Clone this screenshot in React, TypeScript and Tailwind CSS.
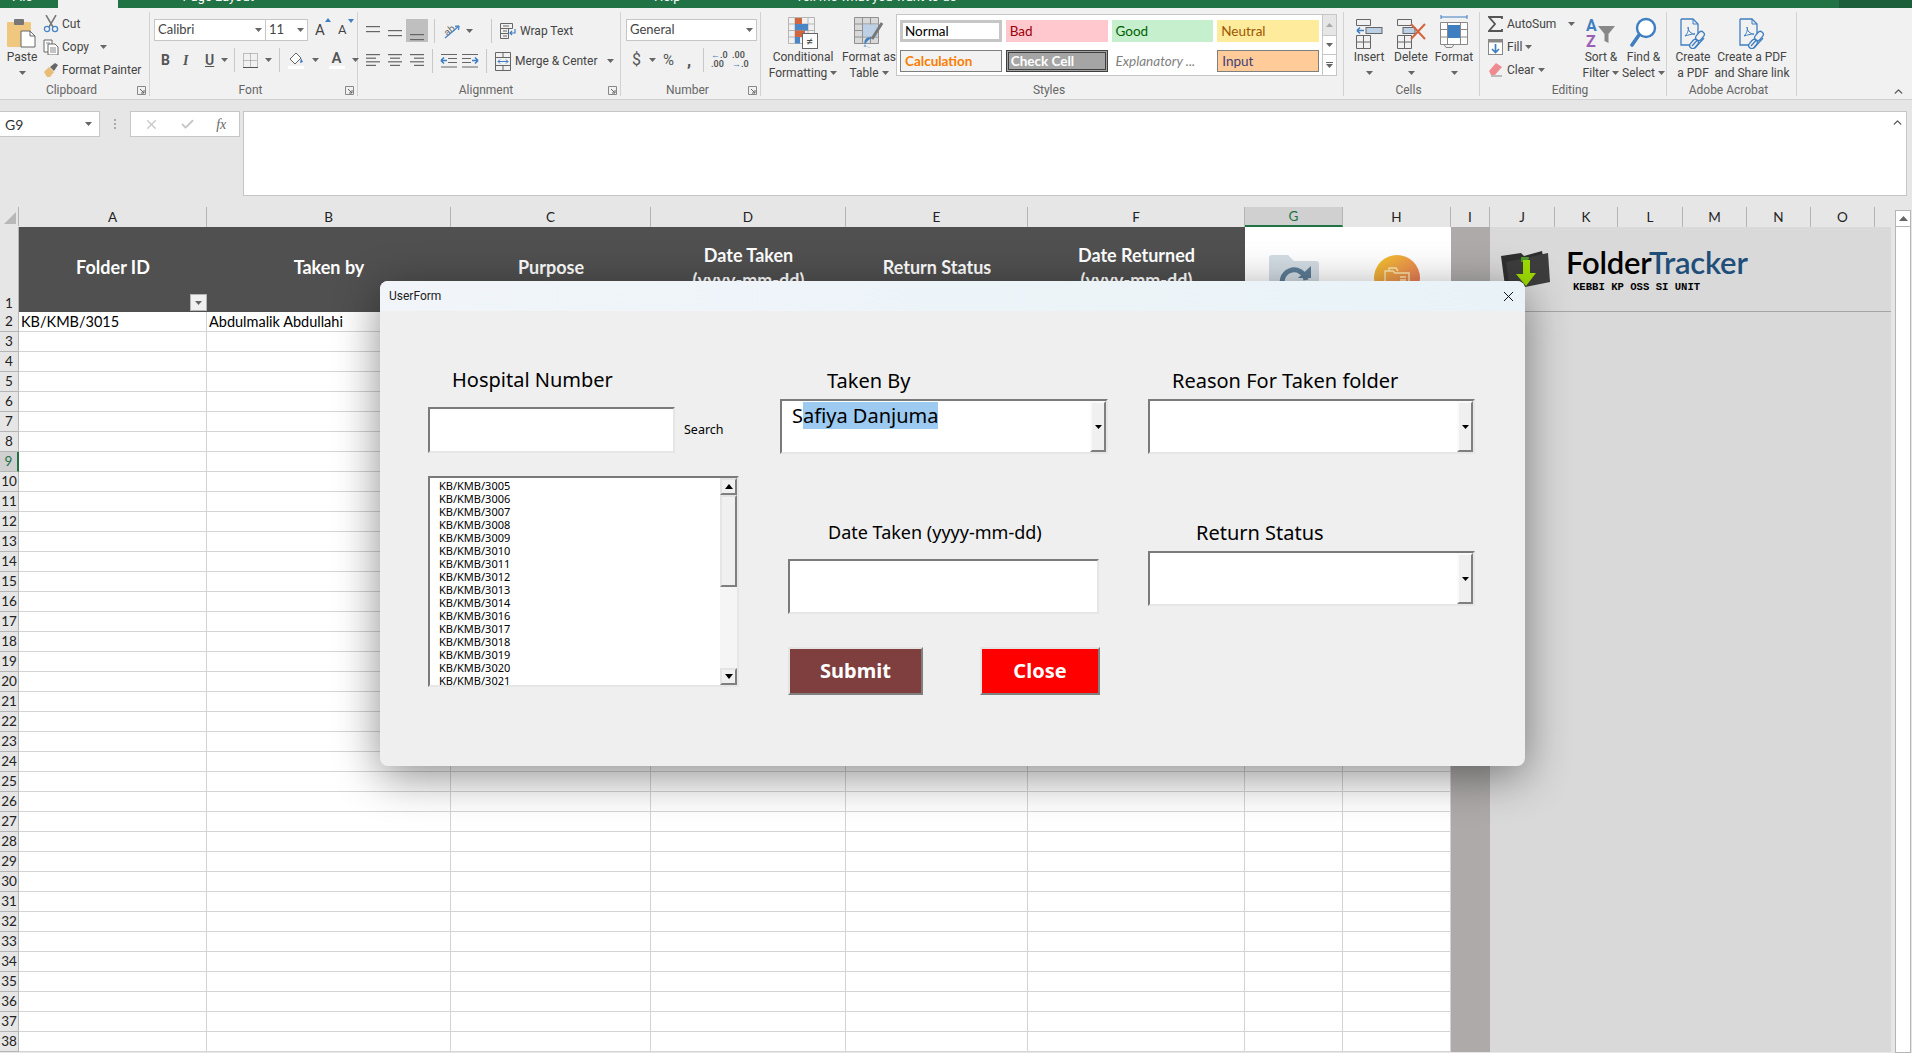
import React from 'react';
import { Check, ChevronUp, X } from 'lucide-react';

// --- petites icones du ruban ---
const Caret = ({ className = '' }: { className?: string }) => (
  <svg width="7" height="4" viewBox="0 0 7 4" className={`shrink-0 ${className}`}><path d="M0 0h7L3.5 4z" fill="#666" /></svg>
);

const Lines = ({ rows, y0 = 0, step = 5 }: { rows: [number, number][]; y0?: number; step?: number }) => (
  <svg width="15" height="16" viewBox="0 0 15 16">
    {rows.map((r, i) => <rect key={i} x={r[0]} y={y0 + i * step} width={r[1] - r[0]} height="1.2" fill="#666" />)}
  </svg>
);

const Launcher = () => (
  <svg width="9" height="9" viewBox="0 0 9 9" className="absolute right-[3px] bottom-[1px]">
    <path d="M0.5 8.5V0.5H8.5V8.5z" fill="none" stroke="#888" />
    <path d="M3 3l4 4M7 4v3H4" fill="none" stroke="#666" />
  </svg>
);

const PasteIcon = () => (
  <svg width="30" height="30" viewBox="0 0 30 30">
    <rect x="0" y="4" width="24" height="25" rx="1" fill="#efc77f" />
    <rect x="7" y="1" width="10" height="6" rx="1" fill="#777" />
    <path d="M14 13h9l5 5v11H14z" fill="#fff" stroke="#666" />
    <path d="M23 13v5h5" fill="none" stroke="#666" />
  </svg>
);
const CutIcon = () => (
  <svg width="16" height="18" viewBox="0 0 16 18">
    <path d="M3 0l7 12M13 0L6 12" stroke="#777" strokeWidth="1.5" fill="none" />
    <circle cx="4" cy="14" r="2.6" fill="none" stroke="#4a86c5" strokeWidth="1.3" />
    <circle cx="12" cy="14" r="2.6" fill="none" stroke="#4a86c5" strokeWidth="1.3" />
  </svg>
);
const CopyIcon = () => (
  <svg width="16" height="16" viewBox="0 0 16 16">
    <path d="M1 1h8v12H1z" fill="#fff" stroke="#666" />
    <path d="M5 5h7l3 3v8H5z" fill="#fff" stroke="#666" />
    <path d="M7 9h6M7 11h6M7 13h6M3 4h4" stroke="#888" />
  </svg>
);
const BrushIcon = () => (
  <svg width="16" height="16" viewBox="0 0 16 16">
    <path d="M1 10l5-5 5 5-4 5H4z" fill="#e9bd77" />
    <path d="M7 5l5-4 3 2-4 6z" fill="#666" />
  </svg>
);
const OrientIcon = () => (
  <svg width="19" height="20" viewBox="0 0 19 20">
    <text x="1" y="12" fontSize="10" fill="#666" transform="rotate(-40 8 8)" fontFamily="Roboto">ab</text>
    <path d="M3 17L17 5" stroke="#4a86c5" strokeWidth="1.3" />
    <path d="M17 5l-4 .5M17 5l-.5 4" stroke="#4a86c5" strokeWidth="1.3" fill="none" />
  </svg>
);
const WrapIcon = () => (
  <svg width="16" height="16" viewBox="0 0 16 16">
    <path d="M0.5 0.5h12v5h-12zM0.5 5.5h8v5h-8zM0.5 10.5h8v5h-8z" fill="none" stroke="#666" />
    <path d="M3 3h6M3 8h4M3 13h4" stroke="#666" />
    <path d="M15 6v4h-5M12 8l-2 2 2 2" fill="none" stroke="#3f7fc1" strokeWidth="1.2" />
  </svg>
);
const MergeIcon = () => (
  <svg width="16" height="19" viewBox="0 0 16 19">
    <path d="M0.5 0.5h15v18h-15zM0.5 5.5h15M0.5 13.5h15M8 0.5v5M8 13.5v5" fill="none" stroke="#666" />
    <path d="M3 9.5h10M3 9.5l2-2M3 9.5l2 2M13 9.5l-2-2M13 9.5l-2 2" stroke="#3f7fc1" fill="none" />
  </svg>
);
const IndentIcon = ({ flip = false }: { flip?: boolean }) => (
  <svg width="17" height="14" viewBox="0 0 17 14" className={flip ? '-scale-x-100' : ''}>
    <path d="M1 0.5h16M8 4.5h9M8 8.5h9M1 13h16" stroke="#666" />
    <path d="M7 6.5H1M1 6.5l3-3M1 6.5l3 3" stroke="#3f7fc1" strokeWidth="1.6" fill="none" />
  </svg>
);
const CondIcon = () => (
  <svg width="30" height="32" viewBox="0 0 30 32">
    <path d="M0.5 0.5h26v26h-26zM0.5 7h26M0.5 13.5h26M0.5 20h26M7 0.5v26M20 0.5v26" fill="none" stroke="#b5b5b5" />
    <rect x="7" y="1" width="7" height="6" fill="#d3653d" />
    <rect x="7" y="7" width="13" height="6.5" fill="#4a86c5" />
    <rect x="7" y="13.5" width="10" height="6.5" fill="#d3653d" />
    <rect x="7" y="20" width="5" height="6.5" fill="#4a86c5" />
    <rect x="14.5" y="16.5" width="15" height="15" fill="#fff" stroke="#666" />
    <text x="18" y="29" fontSize="13" fill="#444" fontFamily="Roboto">≠</text>
  </svg>
);
const TableIcon = () => (
  <svg width="30" height="32" viewBox="0 0 30 32">
    <path d="M0.5 0.5h24v26h-24zM0.5 7h24M0.5 13.5h24M0.5 20h24M8.5 0.5v26M16.5 0.5v26" fill="#d9d9d9" stroke="#909090" />
    <rect x="9" y="7.5" width="15" height="12" fill="#bcd0e6" />
    <path d="M28 6L18 22" stroke="#777" strokeWidth="3" />
    <path d="M18 21a5 5 0 1 0-1 9c-5 0-6-1-8 0 3-2 2-6 9-9z" fill="#3f7fc1" />
  </svg>
);
const InsertIcon = () => (
  <svg width="28" height="32" viewBox="0 0 28 32">
    <path d="M1.5 2.5h14v6h-14zM1.5 18.5h14v13h-14zM1.5 25h14M8.5 18.5v13" fill="none" stroke="#666" />
    <rect x="11" y="10.5" width="16" height="6" fill="#bcd0e6" stroke="#666" />
    <path d="M9 13.5H2M2 13.5l3-3M2 13.5l3 3" stroke="#3f7fc1" strokeWidth="1.6" fill="none" />
  </svg>
);
const DeleteIcon = () => (
  <svg width="30" height="32" viewBox="0 0 30 32">
    <path d="M1.5 2.5h14v6h-14zM1.5 18.5h14v13h-14zM1.5 25h14M8.5 18.5v13" fill="none" stroke="#666" />
    <rect x="7" y="10.5" width="12" height="6" fill="#bcd0e6" stroke="#666" />
    <path d="M15 7l14 15M29 7L15 22" stroke="#d3653d" strokeWidth="2" />
  </svg>
);
const FormatIcon = () => (
  <svg width="28" height="36" viewBox="0 0 28 36">
    <path d="M1 2h26M1 0v4M27 0v4" stroke="#3f7fc1" fill="none" />
    <path d="M0.5 7.5h27v22h-27zM0.5 14.5h27M0.5 22h27M7.5 7.5v22M20.5 7.5v22" fill="#fff" stroke="#888" />
    <rect x="8" y="10" width="12" height="13" fill="#3f7fc1" />
    <path d="M4 29.5l2 3h6l2-3" fill="none" stroke="#888" />
  </svg>
);
const SumIcon = () => (
  <svg width="15" height="16" viewBox="0 0 15 16"><path d="M14 3V1H1l6 7-6 7h13v-2" fill="none" stroke="#555" strokeWidth="1.8" /></svg>
);
const FillIcon = () => (
  <svg width="15" height="16" viewBox="0 0 15 16">
    <rect x="0.5" y="0.5" width="14" height="15" fill="#fff" stroke="#888" />
    <rect x="0.5" y="0.5" width="14" height="3" fill="#888" />
    <path d="M7.5 5v8M4 10l3.5 3.5L11 10" fill="none" stroke="#3f7fc1" strokeWidth="1.7" />
  </svg>
);
const EraserIcon = () => (
  <svg width="15" height="15" viewBox="0 0 15 15">
    <path d="M1 9l7-8 6 4-7 8H3z" fill="#ee8a92" />
    <path d="M3 14h11" stroke="#888" />
  </svg>
);
const SortIcon = () => (
  <svg width="30" height="32" viewBox="0 0 30 32">
    <text x="0" y="14" fontSize="16" fontWeight="700" fill="#3f7fc1" fontFamily="Roboto">A</text>
    <text x="0" y="30" fontSize="16" fontWeight="700" fill="#9a5fb5" fontFamily="Roboto">Z</text>
    <path d="M12 9h17l-6.5 8v9l-4-2v-7z" fill="#888" />
  </svg>
);
const FindIcon = () => (
  <svg width="28" height="32" viewBox="0 0 28 32">
    <circle cx="16" cy="11" r="9" fill="#fff" stroke="#3f7fc1" strokeWidth="2.4" />
    <path d="M9 18L2 28" stroke="#3f7fc1" strokeWidth="3.6" strokeLinecap="round" />
  </svg>
);
const PdfIcon = () => (
  <svg width="26" height="32" viewBox="0 0 26 32">
    <path d="M1 2h12l5 5v12M1 2v26h9" fill="none" stroke="#3f7fc1" strokeWidth="1.3" />
    <path d="M13 2v5h5" fill="none" stroke="#3f7fc1" />
    <path d="M5 19c3-3 4-7 3-9 0 4 3 7 7 7-3 0-7 1-10 2z" fill="none" stroke="#3f7fc1" />
    <path d="M12 29l9-10M15 31l9-10" stroke="#3f7fc1" strokeWidth="1.3" />
    <rect x="17" y="14" width="6" height="10" rx="3" transform="rotate(40 20 19)" fill="#f1f1f1" stroke="#3f7fc1" strokeWidth="1.3" />
    <rect x="11" y="22" width="6" height="10" rx="3" transform="rotate(40 14 27)" fill="none" stroke="#3f7fc1" strokeWidth="1.3" />
  </svg>
);

// --- ruban ---
const Group = ({ width, label, launcher, children }: { width: string; label: string; launcher?: boolean; children: React.ReactNode }) => (
  <div className={`${width} h-[84px] shrink-0 flex flex-col relative border-r border-[#d2d2d2]`}>
    <div className="h-[72px] flex">{children}</div>
    <div className="h-[12px] leading-[12px] text-[12px] text-[#666] text-center pr-[6px]">{label}</div>
    {launcher && <Launcher />}
  </div>
);

const BigBtn = ({ width, icon, l1, l2, caret }: { width: string; icon: React.ReactNode; l1: string; l2?: string; caret?: boolean }) => (
  <div className={`${width} flex flex-col items-center shrink-0`}>
    <div className="h-[33px] mt-[4px] flex items-center justify-center">{icon}</div>
    <div className="h-[16px] leading-[16px] whitespace-nowrap">{l1}</div>
    <div className="h-[16px] leading-[16px] whitespace-nowrap flex items-center gap-[3px]">{l2}{caret && <Caret />}</div>
  </div>
);

const SmallRow = ({ icon, text, caret, gap = 'gap-[3px]' }: { icon: React.ReactNode; text: string; caret?: React.ReactNode; gap?: string }) => (
  <div className={`h-[23px] flex items-center ${gap} whitespace-nowrap`}>
    <div className="w-[17px] flex justify-center shrink-0">{icon}</div>
    <span>{text}</span>
    {caret}
  </div>
);

const Sep = () => <div className="w-px h-[24px] bg-[#c8c8c8] shrink-0" />;

const StyleCell = ({ className, children }: { className: string; children: React.ReactNode }) => (
  <div className={`h-[22px] flex items-center px-[4px] text-[13.5px] font-['Lato',sans-serif] whitespace-nowrap overflow-hidden ${className}`}>{children}</div>
);

const Ribbon = () => (
  <div className="h-[92px] bg-[#f1f1f1] border-b border-[#d0d0d0] flex pt-[4px] text-[12px] text-[#444] box-border">
    <Group width="w-[150px]" label="Clipboard" launcher>
      <div className="w-[41px] flex flex-col items-center pl-[3px] shrink-0">
        <div className="mt-[4px] h-[33px] flex items-center"><PasteIcon /></div>
        <div className="h-[16px] leading-[16px]">Paste</div>
        <div className="h-[16px] flex items-center"><Caret /></div>
      </div>
      <div className="pl-[1px] flex flex-col">
        <SmallRow icon={<CutIcon />} text="Cut" />
        <SmallRow icon={<CopyIcon />} text="Copy" caret={<Caret className="ml-[8px]" />} />
        <SmallRow icon={<BrushIcon />} text="Format Painter" />
      </div>
    </Group>

    <Group width="w-[208px]" label="Font" launcher>
      <div className="pl-[4px] pt-[7px] flex flex-col gap-[8px]">
        <div className="flex items-center h-[22px]">
          <div className="w-[112px] h-[22px] bg-white border border-[#c6c6c6] flex items-center justify-between px-[3px] font-['Lato',sans-serif] text-[13px]">Calibri<Caret /></div>
          <div className="w-[42px] h-[22px] bg-white border border-[#c6c6c6] border-l-0 flex items-center justify-between px-[3px] font-['Lato',sans-serif] text-[13px]">11<Caret /></div>
          <div className="ml-[7px] w-[20px] text-[15px] relative">A<span className="absolute left-[10px] -top-[1px]"><svg width="7" height="5"><path d="M0 4h6L3 0z" fill="#3f7fc1" /></svg></span></div>
          <div className="ml-[3px] w-[20px] text-[13px] relative">A<span className="absolute left-[10px] -top-[1px]"><svg width="7" height="5"><path d="M0 0h6L3 4z" fill="#3f7fc1" /></svg></span></div>
        </div>
        <div className="flex items-center h-[22px] text-[14px] text-[#555]">
          <span className="ml-[7px] w-[22px] font-bold">B</span>
          <span className="w-[22px] italic font-['Liberation_Serif',serif] font-bold">I</span>
          <span className="w-[15px] underline font-semibold">U</span>
          <Caret className="ml-[1px]" />
          <div className="ml-[6px]"><Sep /></div>
          <svg width="15" height="15" viewBox="0 0 15 15" className="ml-[8px]"><path d="M0.5 0.5h14v14h-14zM7.5 0.5v14M0.5 7.5h14" fill="none" stroke="#888" strokeDasharray="1 1" /><path d="M0 14.5h15" stroke="#555" /></svg>
          <Caret className="ml-[7px]" />
          <div className="ml-[7px]"><Sep /></div>
          <div className="ml-[7px] w-[17px] flex flex-col items-center">
            <svg width="16" height="15" viewBox="0 0 16 15"><path d="M2 8l6-6 5 5-6 6z" fill="#fff" stroke="#666" /><path d="M13 7l2 4-3 1z" fill="#3f7fc1" /></svg>
            <div className="w-[16px] h-[3px] bg-white" />
          </div>
          <Caret className="ml-[8px]" />
          <div className="ml-[9px] w-[17px] flex flex-col items-center text-[15px] leading-[15px] font-semibold">A<div className="w-[16px] h-[3px] bg-white" /></div>
          <Caret className="ml-[7px]" />
        </div>
      </div>
    </Group>

    <Group width="w-[263px]" label="Alignment" launcher>
      <div className="pl-[8px] pt-[7px] flex flex-col gap-[8px]">
        <div className="flex items-center h-[23px]">
          <div className="w-[22px] pt-[3px]"><Lines rows={[[0, 14], [0, 14]]} y0={2} /></div>
          <div className="w-[22px] pt-[3px]"><Lines rows={[[0, 14], [0, 14]]} y0={6} /></div>
          <div className="w-[22px] -ml-[4px] mr-[4px] h-[23px] bg-[#bfbfbf] flex items-end justify-center pb-[1px]"><Lines rows={[[0, 14], [0, 14]]} y0={9} /></div>
          <div className="ml-[2px]"><Sep /></div>
          <div className="ml-[7px]"><OrientIcon /></div>
          <Caret className="ml-[5px]" />
          <div className="ml-[18px]"><Sep /></div>
          <div className="ml-[8px]"><WrapIcon /></div>
          <span className="ml-[4px] whitespace-nowrap">Wrap Text</span>
        </div>
        <div className="flex items-center h-[22px]">
          <div className="w-[22px]"><Lines rows={[[0, 14], [0, 10], [0, 14], [0, 10]]} y0={1} step={3.6} /></div>
          <div className="w-[22px]"><Lines rows={[[0, 14], [2, 12], [0, 14], [2, 12]]} y0={1} step={3.6} /></div>
          <div className="w-[22px]"><Lines rows={[[0, 14], [4, 14], [0, 14], [4, 14]]} y0={1} step={3.6} /></div>
          <div className="ml-[0px]"><Sep /></div>
          <div className="ml-[7px]"><IndentIcon /></div>
          <div className="ml-[5px]"><IndentIcon flip /></div>
          <div className="ml-[7px]"><Sep /></div>
          <div className="ml-[8px]"><MergeIcon /></div>
          <span className="ml-[4px] whitespace-nowrap">Merge &amp; Center</span>
          <Caret className="ml-[10px]" />
        </div>
      </div>
    </Group>

    <Group width="w-[140px]" label="Number" launcher>
      <div className="pl-[5px] pt-[7px] flex flex-col gap-[8px]">
        <div className="w-[131px] h-[22px] bg-white border border-[#c6c6c6] flex items-center justify-between px-[3px] font-['Lato',sans-serif] text-[13px]">General<Caret /></div>
        <div className="flex items-center h-[22px] text-[#555]">
          <span className="ml-[6px] w-[17px] text-[16px]">$</span>
          <Caret />
          <span className="ml-[7px] w-[24px] text-[15px]">%</span>
          <span className="w-[13px] text-[17px] font-bold leading-[14px]">,</span>
          <div className="ml-[3px]"><Sep /></div>
          <span className="ml-[7px] w-[21px] text-[9px] leading-[9px] font-semibold"><span className="text-[#3f7fc1]">←</span>.0<br />.00</span>
          <span className="w-[18px] text-[9px] leading-[9px] font-semibold">.00<br /><span className="text-[#3f7fc1]">→</span>.0</span>
        </div>
      </div>
    </Group>

    <Group width="w-[583px]" label="Styles">
      <div className="w-[135px] flex pl-[2px] shrink-0">
        <div className="text-center">
          <BigBtn width="w-[80px]" icon={<CondIcon />} l1="Conditional" l2="Formatting" caret />
        </div>
        <BigBtn width="w-[52px]" icon={<TableIcon />} l1="Format as" l2="Table" caret />
      </div>
      <div className="w-[441px] h-[62px] mt-[2px] bg-white border border-[#c6c6c6] flex shrink-0">
        <div className="w-[425px] grid grid-cols-4 gap-x-[4px] gap-y-[5px] pl-[3px] pt-[5px] pr-[3px]">
          <StyleCell className="border-[3px] border-[#c6c6c6] text-black !px-[2px]">Normal</StyleCell>
          <StyleCell className="bg-[#ffc7ce] text-[#9c0006]">Bad</StyleCell>
          <StyleCell className="bg-[#c6efce] text-[#006100]">Good</StyleCell>
          <StyleCell className="bg-[#ffeb9c] text-[#9c5700]">Neutral</StyleCell>
          <StyleCell className="bg-[#f2f2f2] border border-[#7f7f7f] text-[#fa7d00] font-bold">Calculation</StyleCell>
          <StyleCell className="bg-[#a5a5a5] border-[3px] border-double border-[#3f3f3f] text-white font-bold !px-[2px]">Check Cell</StyleCell>
          <StyleCell className="italic text-[#7f7f7f]">Explanatory ...</StyleCell>
          <StyleCell className="bg-[#ffcc99] border border-[#7f7f7f] text-[#3f3f76]">Input</StyleCell>
        </div>
        <div className="flex-1 flex flex-col border-l border-[#c6c6c6]">
          <div className="h-[20px] bg-[#e6e6e6] flex items-center justify-center"><svg width="7" height="4"><path d="M0 4h7L3.5 0z" fill="#aaa" /></svg></div>
          <div className="h-[20px] border-y border-[#c6c6c6] flex items-center justify-center"><Caret /></div>
          <div className="flex-1 flex flex-col items-center justify-center gap-[1px]"><div className="w-[7px] h-px bg-[#666]" /><Caret /></div>
        </div>
      </div>
    </Group>

    <Group width="w-[136px]" label="Cells">
      <div className="pl-[4px] flex">
        <BigBtn width="w-[42px]" icon={<InsertIcon />} l1="Insert" caret />
        <BigBtn width="w-[42px]" icon={<DeleteIcon />} l1="Delete" caret />
        <BigBtn width="w-[44px]" icon={<FormatIcon />} l1="Format" caret />
      </div>
    </Group>

    <Group width="w-[187px]" label="Editing">
      <div className="pl-[7px] w-[100px] flex flex-col shrink-0">
        <SmallRow icon={<SumIcon />} text="AutoSum" caret={<Caret className="ml-[9px]" />} />
        <SmallRow icon={<FillIcon />} text="Fill" caret={<Caret />} />
        <SmallRow icon={<EraserIcon />} text="Clear" caret={<Caret />} />
      </div>
      <BigBtn width="w-[42px]" icon={<SortIcon />} l1="Sort &" l2="Filter" caret />
      <BigBtn width="w-[43px]" icon={<FindIcon />} l1="Find &" l2="Select" caret />
    </Group>

    <Group width="w-[130px]" label="Adobe Acrobat">
      <div className="pl-[6px] flex">
        <BigBtn width="w-[40px]" icon={<PdfIcon />} l1="Create" l2="a PDF" />
        <BigBtn width="w-[78px]" icon={<PdfIcon />} l1="Create a PDF" l2="and Share link" />
      </div>
    </Group>

    <div className="flex-1 flex items-end justify-end pr-[7px] pb-[4px]">
      <ChevronUp size={13} strokeWidth={2.5} className="text-[#555] mb-[-3px]" />
    </div>
  </div>
);

const FormulaBar = () => (
  <div className="h-[107px] bg-[#e6e6e6] flex pt-[11px] shrink-0">
    <div className="w-[100px] h-[26px] bg-white border border-[#c6c6c6] border-l-0 flex items-center justify-between pl-[5px] pr-[7px] text-[14px] text-[#333] font-['Lato',sans-serif]">G9<Caret /></div>
    <div className="w-[30px] h-[26px] flex flex-col items-center justify-center gap-[2px]">
      <div className="w-[2px] h-[2px] bg-[#aaa]" /><div className="w-[2px] h-[2px] bg-[#aaa]" /><div className="w-[2px] h-[2px] bg-[#aaa]" />
    </div>
    <div className="w-[110px] h-[26px] bg-white border border-[#c6c6c6] flex items-center justify-around px-[2px]">
      <X size={15} strokeWidth={2} className="text-[#c6c6c6]" />
      <Check size={15} strokeWidth={3} className="text-[#c6c6c6]" />
      <span className="font-['Liberation_Serif',serif] italic text-[14px] text-[#666]">fx</span>
    </div>
    <div className="ml-[3px] w-[1664px] h-[85px] bg-white border border-[#c6c6c6] flex justify-end pr-[2px] pt-[4px]">
      <ChevronUp size={13} strokeWidth={2.5} className="text-[#555]" />
    </div>
  </div>
);

// --- feuille ---
const COLS: [string, string][] = [
  ['A', 'w-[188px]'], ['B', 'w-[244px]'], ['C', 'w-[200px]'], ['D', 'w-[195px]'], ['E', 'w-[182px]'], ['F', 'w-[217px]'],
  ['G', 'w-[98px]'], ['H', 'w-[108px]'], ['I', 'w-[39px]'], ['J', 'w-[65px]'], ['K', 'w-[63px]'], ['L', 'w-[65px]'], ['M', 'w-[64px]'], ['N', 'w-[64px]'], ['O', 'w-[64px]'],
];
const GRID_COLS = COLS.slice(0, 8);

const ColumnHeaders = () => (
  <div className="h-[20px] flex shrink-0 border-b border-[#9b9b9b] box-content -mb-px">
    <div className="w-[19px] h-[19px] flex items-end justify-end pr-[2px] pb-[2px] border-r border-[#b5b5b5]">
      <svg width="12" height="12"><path d="M12 0v12H0z" fill="#b8b8b8" /></svg>
    </div>
    {COLS.map(([c, w]) => (
      <div key={c} className={`${w} h-[20px] flex items-center justify-center border-r border-[#b5b5b5] text-[13.5px] font-['Lato',sans-serif] ${c === 'G' ? 'bg-[#d0d0d0] text-[#217346] border-b-2 border-b-[#217346]' : 'text-[#222]'}`}>{c}</div>
    ))}
  </div>
);

const HeadCell = ({ width, lines }: { width: string; lines: string[] }) => (
  <div className={`${width} h-full bg-[#505050] text-white font-bold text-[18px] leading-[25px] font-['Lato',sans-serif] flex flex-col items-center justify-center pb-[4px] whitespace-nowrap`}>
    {lines.map(l => <div key={l}>{l}</div>)}
  </div>
);

const FolderLogo = () => (
  <svg width="52" height="44" viewBox="0 0 52 44">
    <path d="M2 8l20-3 3 3 18-5 2 10L6 38z" fill="#2f2f2f" />
    <path d="M7 14l42-9 2 29-40 8z" fill="#3d3d3d" />
    <path d="M22 9h8l-1 5h-7z" fill="#4f9a2a" />
    <path d="M24 12h7v13h6L27 38 17 26h7z" fill="#9edb00" />
  </svg>
);

const Row1 = () => (
  <div className="h-[85px] flex shrink-0">
    <div className="w-[19px] bg-[#e6e6e6] border-r border-[#b5b5b5] flex items-end justify-center text-[13.5px] font-['Lato',sans-serif] text-[#222] leading-[18px]">1</div>
    <div className="w-[188px] relative h-full">
      <HeadCell width="w-full" lines={['Folder ID']} />
      <div className="absolute right-0 bottom-[1px] w-[17px] h-[17px] bg-[#f0f0f0] border border-[#b5b5b5] flex items-center justify-center"><Caret /></div>
    </div>
    <HeadCell width="w-[244px]" lines={['Taken by']} />
    <HeadCell width="w-[200px]" lines={['Purpose']} />
    <HeadCell width="w-[195px]" lines={['Date Taken', '(yyyy-mm-dd)']} />
    <HeadCell width="w-[182px]" lines={['Return Status']} />
    <HeadCell width="w-[217px]" lines={['Date Returned', '(yyyy-mm-dd)']} />
    <div className="w-[98px] bg-white flex justify-center pt-[27px]">
      <svg width="52" height="50" viewBox="0 0 52 50">
        <path d="M1 4a3 3 0 0 1 3-3h16l6 6h22a3 3 0 0 1 3 3v38H1z" fill="#d3dde4" />
        <path d="M38 26a12 12 0 1 0-3 10" fill="none" stroke="#5d7d97" strokeWidth="5" />
        <path d="M30 24h13V12z" fill="#5d7d97" />
      </svg>
    </div>
    <div className="w-[108px] bg-white flex justify-center pt-[28px]">
      <div className="w-[46px] h-[46px] rounded-full bg-gradient-to-br from-[#f4c90e] to-[#e2605e] flex items-center justify-center">
        <svg width="26" height="22" viewBox="0 0 26 22"><path d="M1 21V4h8l2 2h14v15zM5 4V1h7l2 3M16 10h6M16 13h6" fill="none" stroke="#fde7b0" strokeWidth="1.4" /></svg>
      </div>
    </div>
    <div className="w-[39px] bg-[#aeaaaa]" />
    <div className="flex-1 bg-[#d9d9d9] border-b border-[#a6a6a6] flex pl-[9px] pt-[21px]">
      <FolderLogo />
      <div className="ml-[15px] flex flex-col">
        <div className="text-[31px] leading-[36px] -mt-[4px] font-semibold font-['Lato',sans-serif] tracking-[-0.2px] text-black">Folder<span className="text-[#1f4e79]">Tracker</span></div>
        <div className="ml-[7px] text-[10.6px] leading-[14px] font-bold font-['Liberation_Mono',monospace] whitespace-nowrap text-black">KEBBI KP OSS SI UNIT</div>
      </div>
    </div>
  </div>
);

const DataRow = ({ n }: { n: number }) => (
  <div className="h-[20px] flex shrink-0">
    <div className={`w-[19px] border-r border-b border-[#b5b5b5] flex items-center justify-center text-[13.5px] font-['Lato',sans-serif] ${n === 9 ? 'bg-[#d0d0d0] text-[#217346] border-r-2 border-r-[#217346]' : 'bg-[#e6e6e6] text-[#222]'}`}>{n}</div>
    {GRID_COLS.map(([c, w]) => (
      <div key={c} className={`${w} border-r border-b border-[#d4d4d4] bg-white text-[14.5px] leading-[19px] px-[2px] font-['Lato',sans-serif] text-black whitespace-nowrap overflow-hidden`}>
        {n === 2 && c === 'A' && 'KB/KMB/3015'}
        {n === 2 && c === 'B' && 'Abdulmalik Abdullahi'}
      </div>
    ))}
    <div className="w-[39px] bg-[#aeaaaa]" />
    <div className="flex-1 bg-[#d9d9d9]" />
  </div>
);

const Sheet = () => (
  <div className="flex-1 flex min-h-0 bg-[#e6e6e6]">
    <div className="w-[1891px] flex flex-col shrink-0 overflow-hidden">
      <ColumnHeaders />
      <Row1 />
      {Array.from({ length: 37 }, (_, i) => <DataRow key={i} n={i + 2} />)}
    </div>
    <div className="ml-[4px] flex-1 flex flex-col pt-[3px] pr-[1px]">
      <div className="h-[17px] bg-white border border-[#b5b5b5] flex items-center justify-center"><svg width="9" height="5"><path d="M0 5h9L4.5 0z" fill="#666" /></svg></div>
      <div className="flex-1 bg-white border border-[#b5b5b5] border-t-0" />
    </div>
  </div>
);

// --- formulaire VBA ---
const sunken = 'border-2 border-t-[#7a7a7a] border-l-[#7a7a7a] border-b-[#e6e6e6] border-r-[#e6e6e6] bg-white';
const raised = 'border-2 border-t-[#e4e4e4] border-l-[#e4e4e4] border-b-[#7f7f7f] border-r-[#7f7f7f]';

const FormLabel = ({ className, children }: { className: string; children: React.ReactNode }) => (
  <div className={`h-[28px] leading-[28px] text-[20px] text-black whitespace-nowrap ${className}`}>{children}</div>
);

const Combo = ({ className, children }: { className?: string; children?: React.ReactNode }) => (
  <div className={`h-[55px] flex ${sunken} ${className ?? ''}`}>
    <div className="flex-1 min-w-0">{children}</div>
    <div className={`w-[16px] bg-[#f0f0f0] ${raised} border-t-[#fafafa] border-l-[#fafafa] flex items-center justify-center`}>
      <svg width="7" height="4"><path d="M0 0h7L3.5 4z" fill="#000" /></svg>
    </div>
  </div>
);

const HOSPITAL_NUMBERS = ['3005', '3006', '3007', '3008', '3009', '3010', '3011', '3012', '3013', '3014', '3016', '3017', '3018', '3019', '3020', '3021'];

const UserForm = () => (
  <div className="absolute left-[380px] top-[281px] w-[1145px] h-[485px] rounded-[8px] bg-[#efefef] shadow-[0_10px_45px_rgba(0,0,0,0.45)] overflow-hidden flex flex-col font-['Noto_Sans',sans-serif]">
    <div className="h-[30px] shrink-0 bg-gradient-to-r from-[#f1f5fa] to-[#e9f3f7] flex items-center justify-between pl-[9px] pr-[8px]">
      <span className="text-[12px] text-[#222] font-['Roboto',sans-serif]">UserForm</span>
      <X size={17} strokeWidth={1.3} className="text-black" />
    </div>
    <div className="flex pl-[48px]">
      <div className="w-[311px] shrink-0 flex flex-col pt-[55px]">
        <FormLabel className="pl-[24px]">Hospital Number</FormLabel>
        <div className="mt-[13px] flex items-center">
          <div className={`w-[247px] h-[46px] ${sunken}`} />
          <span className="ml-[9px] text-[12.5px] text-black">Search</span>
        </div>
        <div className={`mt-[23px] h-[211px] flex ${sunken}`}>
          <div className="flex-1 pl-[9px] pt-[1px] text-[11px] leading-[13px] text-black">
            {HOSPITAL_NUMBERS.map(n => <div key={n}>KB/KMB/{n}</div>)}
          </div>
          <div className="w-[17px] flex flex-col bg-[#f5f5f5]">
            <div className={`h-[17px] bg-[#f0f0f0] ${raised} flex items-center justify-center`}><svg width="8" height="5"><path d="M0 5h8L4 0z" fill="#000" /></svg></div>
            <div className={`h-[92px] bg-[#f0f0f0] ${raised}`} />
            <div className="flex-1" />
            <div className={`h-[17px] bg-[#f0f0f0] ${raised} flex items-center justify-center`}><svg width="8" height="5"><path d="M0 0h8L4 5z" fill="#000" /></svg></div>
          </div>
        </div>
      </div>

      <div className="ml-[41px] w-[328px] shrink-0 flex flex-col pt-[56px]">
        <FormLabel className="pl-[47px]">Taken By</FormLabel>
        <Combo className="mt-[4px]">
          <div className="pl-[10px] pt-[2px] text-[20px] leading-[26px] whitespace-nowrap text-black">S<span className="bg-[#9ccaf0]">afiya Danjuma</span></div>
        </Combo>
        <FormLabel className="mt-[64px] pl-[48px] !text-[18px]">Date Taken (yyyy-mm-dd)</FormLabel>
        <div className={`mt-[13px] ml-[8px] w-[311px] h-[55px] ${sunken}`} />
        <div className="mt-[33px] ml-[8px] flex">
          <div className={`w-[135px] h-[48px] bg-[#7f3f3f] ${raised} flex items-center justify-center text-white font-bold text-[20px]`}>Submit</div>
          <div className={`ml-[57px] w-[120px] h-[48px] bg-[#ff0000] ${raised} flex items-center justify-center text-white font-bold text-[20px]`}>Close</div>
        </div>
      </div>

      <div className="ml-[40px] w-[327px] shrink-0 flex flex-col pt-[56px]">
        <FormLabel className="pl-[24px]">Reason For Taken folder</FormLabel>
        <Combo className="mt-[4px]" />
        <FormLabel className="mt-[65px] pl-[48px]">Return Status</FormLabel>
        <Combo className="mt-[4px]" />
      </div>
    </div>
  </div>
);

export default function App() {
  return (
    <div className="relative w-[1912px] h-[1053px] overflow-hidden flex flex-col bg-[#e6e6e6] font-['Roboto',sans-serif]">
      <div className="h-[8px] shrink-0 bg-[#217346] flex overflow-hidden text-[13px] leading-[16px] text-white">
        <span className="ml-[12px] -mt-[11px]">File</span>
        <div className="ml-[26px] w-[60px] h-[8px] bg-[#f1f1f1]" />
        <span className="ml-[64px] -mt-[11px]">Page Layout</span>
        <span className="ml-[400px] -mt-[11px]">Help</span>
        <span className="ml-[115px] -mt-[11px]">Tell me what you want to do</span>
        <div className="ml-auto w-[73px] h-[8px] bg-[#1c5e3a]" />
      </div>
      <Ribbon />
      <FormulaBar />
      <Sheet />
      <UserForm />
    </div>
  );
}
